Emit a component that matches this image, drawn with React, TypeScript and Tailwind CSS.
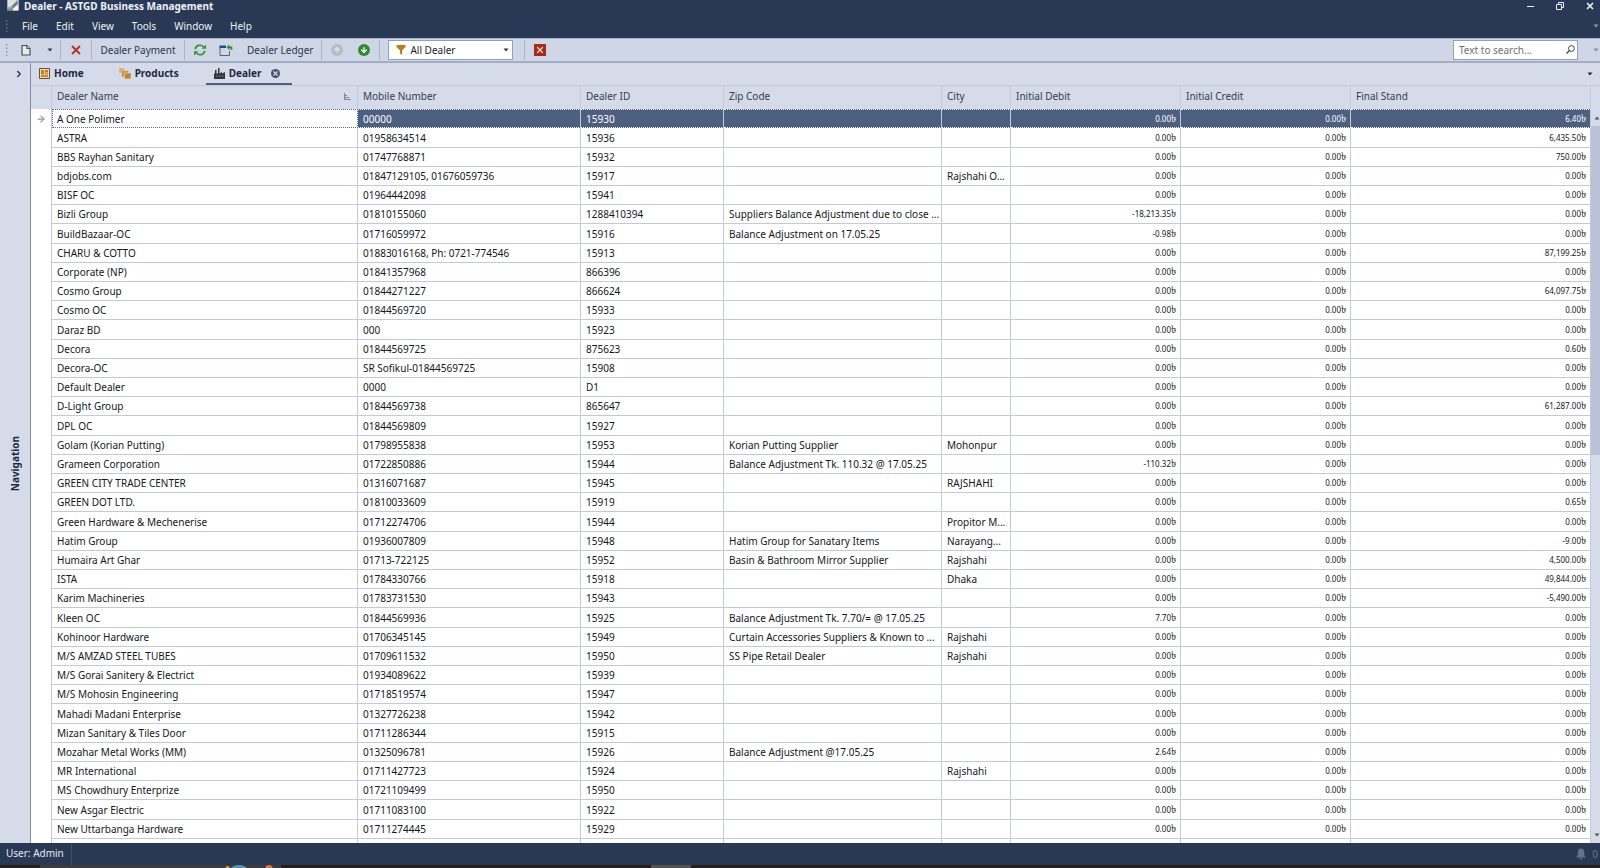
import type { ReactNode } from 'react';
import { ArrowDown, ArrowRight, ArrowUp, ChevronRight, X } from 'lucide-react';
import clsx from 'clsx';

type Dealer = {
  name: string;
  mobile: string;
  id: string;
  zip?: string;
  city?: string;
  debit?: string;
  final?: string;
};

const DEALERS: Dealer[] = [
  { name: 'A One Polimer', mobile: '00000', id: '15930', final: '6.40' },
  { name: 'ASTRA', mobile: '01958634514', id: '15936', final: '6,435.50' },
  { name: 'BBS Rayhan Sanitary', mobile: '01747768871', id: '15932', final: '750.00' },
  { name: 'bdjobs.com', mobile: '01847129105, 01676059736', id: '15917', city: 'Rajshahi O...' },
  { name: 'BISF OC', mobile: '01964442098', id: '15941' },
  {
    name: 'Bizli Group',
    mobile: '01810155060',
    id: '1288410394',
    zip: 'Suppliers Balance Adjustment due to close ...',
    debit: '-18,213.35',
  },
  { name: 'BuildBazaar-OC', mobile: '01716059972', id: '15916', zip: 'Balance Adjustment on 17.05.25', debit: '-0.98' },
  { name: 'CHARU & COTTO', mobile: '01883016168, Ph: 0721-774546', id: '15913', final: '87,199.25' },
  { name: 'Corporate (NP)', mobile: '01841357968', id: '866396' },
  { name: 'Cosmo Group', mobile: '01844271227', id: '866624', final: '64,097.75' },
  { name: 'Cosmo OC', mobile: '01844569720', id: '15933' },
  { name: 'Daraz BD', mobile: '000', id: '15923' },
  { name: 'Decora', mobile: '01844569725', id: '875623', final: '0.60' },
  { name: 'Decora-OC', mobile: 'SR Sofikul-01844569725', id: '15908' },
  { name: 'Default Dealer', mobile: '0000', id: 'D1' },
  { name: 'D-Light Group', mobile: '01844569738', id: '865647', final: '61,287.00' },
  { name: 'DPL OC', mobile: '01844569809', id: '15927' },
  { name: 'Golam (Korian Putting)', mobile: '01798955838', id: '15953', zip: 'Korian Putting Supplier', city: 'Mohonpur' },
  {
    name: 'Grameen Corporation',
    mobile: '01722850886',
    id: '15944',
    zip: 'Balance Adjustment Tk. 110.32 @ 17.05.25',
    debit: '-110.32',
  },
  { name: 'GREEN CITY TRADE CENTER', mobile: '01316071687', id: '15945', city: 'RAJSHAHI' },
  { name: 'GREEN DOT LTD.', mobile: '01810033609', id: '15919', final: '0.65' },
  { name: 'Green Hardware & Mechenerise', mobile: '01712274706', id: '15944', city: 'Propitor M...' },
  {
    name: 'Hatim Group',
    mobile: '01936007809',
    id: '15948',
    zip: 'Hatim Group for Sanatary Items',
    city: 'Narayang...',
    final: '-9.00',
  },
  {
    name: 'Humaira Art Ghar',
    mobile: '01713-722125',
    id: '15952',
    zip: 'Basin & Bathroom Mirror Supplier',
    city: 'Rajshahi',
    final: '4,500.00',
  },
  { name: 'ISTA', mobile: '01784330766', id: '15918', city: 'Dhaka', final: '49,844.00' },
  { name: 'Karim Machineries', mobile: '01783731530', id: '15943', final: '-5,490.00' },
  { name: 'Kleen OC', mobile: '01844569936', id: '15925', zip: 'Balance Adjustment Tk. 7.70/= @ 17.05.25', debit: '7.70' },
  {
    name: 'Kohinoor Hardware',
    mobile: '01706345145',
    id: '15949',
    zip: 'Curtain Accessories Suppliers & Known to ...',
    city: 'Rajshahi',
  },
  { name: 'M/S AMZAD STEEL TUBES', mobile: '01709611532', id: '15950', zip: 'SS Pipe Retail Dealer', city: 'Rajshahi' },
  { name: 'M/S Gorai Sanitery & Electrict', mobile: '01934089622', id: '15939' },
  { name: 'M/S Mohosin Engineering', mobile: '01718519574', id: '15947' },
  { name: 'Mahadi Madani Enterprise', mobile: '01327726238', id: '15942' },
  { name: 'Mizan Sanitary & Tiles Door', mobile: '01711286344', id: '15915' },
  { name: 'Mozahar Metal Works (MM)', mobile: '01325096781', id: '15926', zip: 'Balance Adjustment @17.05.25', debit: '2.64' },
  { name: 'MR International', mobile: '01711427723', id: '15924', city: 'Rajshahi' },
  { name: 'MS Chowdhury Enterprize', mobile: '01721109499', id: '15950' },
  { name: 'New Asgar Electric', mobile: '01711083100', id: '15922' },
  { name: 'New Uttarbanga Hardware', mobile: '01711274445', id: '15929' },
];

const MENU = ['File', 'Edit', 'View', 'Tools', 'Window', 'Help'];
const COLUMNS = ['Dealer Name', 'Mobile Number', 'Dealer ID', 'Zip Code', 'City', 'Initial Debit', 'Initial Credit', 'Final Stand'];

function Caret({ className }: { className?: string }) {
  return (
    <svg viewBox="0 0 6 4" className={clsx('h-1 w-1.5 shrink-0', className)} fill="currentColor" aria-hidden="true">
      <path d="M0.5 0.5h5L3 3.5z" />
    </svg>
  );
}

function Grip({ className }: { className?: string }) {
  return (
    <svg viewBox="0 0 2 12" className={clsx('h-3 w-0.5 shrink-0', className)} fill="currentColor" aria-hidden="true">
      <path d="M0 0h1.5v1.5H0zM0 3.5h1.5V5H0zM0 7h1.5v1.5H0zM0 10.5h1.5V12H0z" />
    </svg>
  );
}

function Separator() {
  return <span className="h-5 w-px shrink-0 bg-[#a9b3c9]" />;
}

function ToolButton({ label, className, children }: { label: string; className: string; children: ReactNode }) {
  return (
    <button type="button" aria-label={label} className={clsx('flex h-5 shrink-0 items-center justify-center', className)}>
      {children}
    </button>
  );
}

function TitleBar() {
  return (
    <header className="bg-[#293955] text-[#eef1f7]">
      <div className="flex h-3 items-center pl-[7px]">
        <svg viewBox="0 0 12 12" className="h-3 w-3 shrink-0" aria-hidden="true">
          <path d="M0 0h12v10.500H0z" fill="#a7acb2" />
          <path d="M1 0h9L5 6 1 7z" fill="#dfe2e5" />
          <path d="M4.500 6.500L10 1.500l1 1.500-5 5z" fill="#6d737c" />
          <path d="M6.500 8.500L11 4.500v6H5z" fill="#f4f5f6" />
          <path d="M0 8.500h6v2H0z" fill="#858b93" />
        </svg>
        <h1 className="ml-[5px] font-bold leading-3">Dealer - ASTGD Business Management</h1>
        <div className="ml-auto flex items-center gap-[18px] pr-1">
          <button type="button" aria-label="Minimize" className="flex h-3 w-3 items-center justify-center">
            <span className="h-px w-[7px] bg-current" />
          </button>
          <button type="button" aria-label="Restore" className="flex h-3 w-3 items-center justify-center">
            <svg viewBox="0 0 8 8" className="h-2 w-2" fill="none" stroke="currentColor">
              <path d="M0.5 2.5h5v5h-5zM2.5 2.5v-2h5v5h-2" />
            </svg>
          </button>
          <button type="button" aria-label="Close" className="flex h-3 w-3 items-center justify-center">
            <X className="h-2.5 w-2.5" strokeWidth={4} />
          </button>
        </div>
      </div>
      <nav className="flex h-[26px] items-center pl-1.5 pt-0.5">
        <Grip className="text-[#5d6c8c]" />
        <div className="ml-3.5 flex gap-[18px]">
          {MENU.map((item) => (
            <button key={item} type="button">
              {item}
            </button>
          ))}
        </div>
        <Caret className="ml-auto mr-px text-[#8e9bb5]" />
      </nav>
    </header>
  );
}

function Toolbar() {
  return (
    <div className="flex h-[25px] items-center border-b-2 border-t border-b-[#a3aec6] border-t-[#aab4ca] bg-[#cfd6e5] pl-1.5 text-[#2b3650]">
      <Grip className="text-[#8f9bb5]" />
      <ToolButton label="New" className="ml-2.5 w-4">
        <svg viewBox="0 0 10 12" className="h-3 w-2.5" fill="#e6e9f0" stroke="#4a4f59" strokeWidth="1.2">
          <path d="M1 1.500h5l3 3v6.500H1z" />
          <path d="M6 1.500v3h3" />
        </svg>
      </ToolButton>
      <ToolButton label="New options" className="ml-2.5 mr-1 w-3">
        <Caret />
      </ToolButton>
      <Separator />
      <ToolButton label="Delete" className="w-[30px]">
        <svg viewBox="0 0 10 10" className="h-2.5 w-2.5" stroke="#b5341f" strokeWidth="1.900">
          <path d="M1 1l8 8M9 1L1 9" />
        </svg>
      </ToolButton>
      <Separator />
      <button type="button" className="w-[92px] text-center">
        Dealer Payment
      </button>
      <Separator />
      <ToolButton label="Refresh" className="w-[30px]">
        <svg viewBox="0 0 12 12" className="h-3 w-3" fill="none" stroke="#35913a" strokeWidth="1.700">
          <path d="M1.200 5.200A4.800 4.800 0 0 1 9.600 3M10.800 6.800A4.800 4.800 0 0 1 2.400 9" />
          <path d="M12 0.500v4.300H7.700zM0 11.500V7.200h4.300z" fill="#35913a" stroke="none" />
        </svg>
      </ToolButton>
      <button type="button" className="flex items-center gap-3.5 pl-1 pr-2">
        <svg viewBox="0 0 14 12" className="h-3 w-3.5" fill="none">
          <path d="M1 3.500v8h9.500V7" stroke="#59606d" />
          <path d="M0.500 1.500h6.500v2.500h-6.500z" fill="#1d4f91" />
          <path d="M7.500 3.300L10.500 0.500v1.900h2.800v3.600h-1.600V4.200h-1.200v1.900z" fill="#2f8c36" />
        </svg>
        Dealer Ledger
      </button>
      <Separator />
      <ToolButton label="Move up" className="w-[30px]">
        <span className="flex h-3 w-3 items-center justify-center rounded-full bg-[#b9bcc3] text-[#dfe2e9]">
          <ArrowUp className="h-2 w-2" strokeWidth={4} />
        </span>
      </ToolButton>
      <ToolButton label="Move down" className="mr-[3px] w-6">
        <span className="flex h-3 w-3 items-center justify-center rounded-full bg-[#2f8a35] text-white">
          <ArrowDown className="h-2 w-2" strokeWidth={4} />
        </span>
      </ToolButton>
      <Separator />
      <div className="relative mx-2 w-[125px] shrink-0">
        <select
          aria-label="Dealer filter"
          defaultValue="All Dealer"
          className="block h-5 w-full appearance-none border border-[#93a0bb] bg-white pl-[21px] text-[#1b2233]"
        >
          <option>All Dealer</option>
        </select>
        <svg viewBox="0 0 10 10" className="pointer-events-none absolute left-2 top-[5px] h-2.5 w-2.5" fill="#c07a1c" aria-hidden="true">
          <path d="M0.500 0h9v2L6 5.500V10L4 8.500v-3L0.500 2z" />
        </svg>
        <Caret className="pointer-events-none absolute right-1 top-2" />
      </div>
      <div className="w-[3px]" />
      <Separator />
      <ToolButton label="Close filter" className="ml-[9px] w-3">
        <span className="flex h-3 w-3 items-center justify-center bg-[#a72b18] text-[#f3d9d4]">
          <X className="h-2.5 w-2.5" strokeWidth={3} />
        </span>
      </ToolButton>
      <div className="relative ml-auto w-[125px] shrink-0">
        <input
          type="text"
          aria-label="Search"
          placeholder="Text to search..."
          className="block h-5 w-full border border-[#93a0bb] bg-white pl-[5px] placeholder:text-[#6b6f78]"
        />
        <svg viewBox="0 0 9 9" className="pointer-events-none absolute right-[3px] top-[5px] h-[9px] w-[9px]" fill="none" stroke="#3a3f4a" aria-hidden="true">
          <circle cx="5.500" cy="3.500" r="2.900" />
          <path d="M3.500 5.500L0.500 8.500" strokeWidth="1.300" />
        </svg>
      </div>
      <Caret className="ml-[15px] mr-px text-[#8490aa]" />
    </div>
  );
}

function Tab({ icon, label, active }: { icon: ReactNode; label: string; active?: boolean }) {
  return (
    <div className={clsx('flex h-[22px] items-center border-b-2 pl-2', active ? 'border-[#4d6082] pr-3' : 'border-transparent pr-2')}>
      <button type="button" role="tab" aria-selected={Boolean(active)} className="flex items-center gap-1 font-bold">
        {icon}
        {label}
      </button>
      <span className="ml-2.5 flex h-[9px] w-[9px]">
        {active && (
          <button type="button" aria-label={`Close ${label}`} className="flex h-[9px] w-[9px] items-center justify-center rounded-full bg-[#47536b] text-[#d6dbe9]">
            <X className="h-[7px] w-[7px]" strokeWidth={4} />
          </button>
        )}
      </span>
    </div>
  );
}

function TabStrip() {
  return (
    <div className="flex h-[22px] items-center bg-[#d6dbe9] text-[#1d2942]" role="tablist">
      <Tab
        label="Home"
        icon={
          <svg viewBox="0 0 11 11" className="h-[11px] w-[11px]">
            <path d="M0.500 0.500h10v10h-10z" fill="#e9dcc8" stroke="#5c5346" />
            <path d="M2 2h3.200v4.500H2zM6 2h3v2.500H6zM6 5.200h3v1.300H6zM2 7.300h7V9H2z" fill="#c97f16" />
          </svg>
        }
      />
      <Tab
        label="Products"
        icon={
          <svg viewBox="0 0 12 11" className="h-[11px] w-3" stroke="#d6dbe9" strokeWidth="0.600">
            <path d="M0 0h5.500v5H0z" fill="#d9a866" />
            <path d="M2.500 2.500h7V9h-7z" fill="#d09344" />
            <path d="M5.500 5H12v6H5.500z" fill="#c8842c" />
          </svg>
        }
      />
      <Tab
        active
        label="Dealer"
        icon={
          <svg viewBox="0 0 11 11" className="h-[11px] w-[11px]">
            <path d="M0 11V5.500h1V2h1.500v3.500H4V0h1.500v5.500L8 4v1.500L11 4v7z" fill="#33363d" />
            <path d="M2 7.500h1.200v1H2zM5 7.500h1.200v1H5zM8 7.500h1.200v1H8z" fill="#9aa0ac" />
          </svg>
        }
      />
      <button type="button" aria-label="Tab list" className="ml-auto mr-[7px]">
        <Caret />
      </button>
    </div>
  );
}

function SideNav() {
  return (
    <aside className="flex w-[31px] shrink-0 flex-col border-r border-[#7f8cab] bg-[#d6dbe9] text-[#1d2942]">
      <button type="button" aria-label="Expand navigation" className="flex h-[21px] items-center justify-end pr-1.5">
        <ChevronRight className="h-2.5 w-2.5" strokeWidth={3} />
      </button>
      <button type="button" className="flex flex-1 items-center justify-center">
        <span className="rotate-180 font-bold [writing-mode:vertical-rl]">Navigation</span>
      </button>
    </aside>
  );
}

function Amount({ value = '0.00', selected }: { value?: string; selected?: boolean }) {
  return (
    <td
      className={clsx(
        'overflow-hidden whitespace-nowrap border-b border-r border-[#c3c9da] pr-1 text-right text-[8px]',
        selected && 'border-t border-t-white border-b-white bg-[#4d6082] text-white [border-bottom-style:dotted] [border-top-style:dotted]',
      )}
    >
      {value}
      <span className="text-[11px] leading-3">৳</span>
    </td>
  );
}

function TextCell({ value, selected }: { value?: string; selected?: boolean }) {
  return (
    <td
      className={clsx(
        'overflow-hidden whitespace-nowrap border-b border-r border-[#c3c9da] pl-[5px]',
        selected && 'border-t border-t-white border-b-white bg-[#4d6082] text-white [border-bottom-style:dotted] [border-top-style:dotted]',
      )}
    >
      {value}
    </td>
  );
}

function DealerTable() {
  return (
    <table className="w-full table-fixed border-separate border-spacing-0 leading-4 text-[#14161c]">
      <colgroup>
        <col className="w-[21px]" />
        <col className="w-[306px]" />
        <col className="w-[223px]" />
        <col className="w-[143px]" />
        <col className="w-[218px]" />
        <col className="w-[69px]" />
        <col className="w-[170px]" />
        <col className="w-[170px]" />
        <col />
      </colgroup>
      <thead>
        <tr className="h-6 bg-[#d6dbe9] text-left text-[#333c52]">
          <th className="border-r border-t border-[#c3c9da]" />
          {COLUMNS.map((column, i) => (
            <th key={column} scope="col" className="border-r border-t border-[#c3c9da] pb-[3px] pl-[5px] font-normal">
              <span className="flex items-center justify-between pr-1.5">
                {column}
                {i === 0 && (
                  <svg viewBox="0 0 7 7" className="h-[7px] w-[7px]" stroke="#7b849a" aria-hidden="true">
                    <path d="M0.500 0v7M0 6.500h7M1 4.500h4M1 2.500h2" />
                  </svg>
                )}
              </span>
            </th>
          ))}
        </tr>
      </thead>
      <tbody>
        {DEALERS.map((dealer, i) => {
          const selected = i === 0;
          return (
            <tr key={dealer.name} className="h-[19px] nth-[5n+2]:h-5" aria-selected={selected}>
              <td className="border-r border-[#c3c9da]">
                {selected && <ArrowRight className="mx-auto h-2.5 w-2.5 text-[#8f9ab3]" strokeWidth={3} />}
              </td>
              <th
                scope="row"
                className={clsx(
                  'overflow-hidden whitespace-nowrap text-left font-normal',
                  selected ? 'border border-dotted border-[#5a6a8a] pl-1' : 'border-b border-r border-[#c3c9da] pl-[5px]',
                )}
              >
                {dealer.name}
              </th>
              <TextCell value={dealer.mobile} selected={selected} />
              <TextCell value={dealer.id} selected={selected} />
              <TextCell value={dealer.zip} selected={selected} />
              <TextCell value={dealer.city} selected={selected} />
              <Amount value={dealer.debit} selected={selected} />
              <Amount selected={selected} />
              <Amount value={dealer.final} selected={selected} />
            </tr>
          );
        })}
        <tr className="h-5">
          <td className="border-r border-[#c3c9da]" />
          {COLUMNS.map((column) => (
            <td key={column} className="border-r border-[#c3c9da]" />
          ))}
        </tr>
      </tbody>
    </table>
  );
}

function ScrollRail() {
  return (
    <div className="flex w-[9px] shrink-0 flex-col border-t border-[#c3c9da] bg-[#d6dbe9] text-[#4b5468]">
      <div className="h-6" />
      <button type="button" aria-label="Scroll up" className="flex h-4 items-center justify-end">
        <Caret className="rotate-180" />
      </button>
      <div className="flex-1">
        <div className="h-[47%] bg-[#bac2d8]" />
      </div>
      <button type="button" aria-label="Scroll down" className="flex h-4 items-center justify-end">
        <Caret />
      </button>
    </div>
  );
}

function StatusBar() {
  return (
    <footer className="flex h-[22px] shrink-0 items-center bg-[#293955] text-[#e4e8f0]">
      <span className="flex h-full items-center border-r border-[#3f4e6b] pb-0.5 pl-1.5 pr-[7px]">User: Admin</span>
      <span className="ml-auto flex items-center gap-1.5 pr-0.5 text-[#66728a]">
        <svg viewBox="0 0 10 12" className="h-3 w-2.5" fill="currentColor" aria-hidden="true">
          <path d="M5 0.500c2.500 0 3.200 2 3.200 4.200 0 2.500 0.500 3.600 1.800 4.800H0c1.300-1.200 1.800-2.300 1.800-4.800C1.800 2.500 2.500 0.500 5 0.500zM3.800 10h2.400c0 2-2.400 2-2.400 0z" />
        </svg>
        0
      </span>
    </footer>
  );
}

function Taskbar() {
  return (
    <div className="flex h-[3px] shrink-0 overflow-hidden bg-[#262019]">
      <div className="ml-10 flex w-[241px] items-start bg-[#3c3c3d] pl-[185px]">
        <svg viewBox="0 0 50 3" className="h-[3px] w-[50px]" aria-hidden="true">
          <circle cx="2.500" cy="3" r="2" fill="#d8a440" />
          <ellipse cx="14" cy="4" rx="8" ry="4" fill="#5b93ad" />
          <circle cx="44" cy="3.500" r="3.500" fill="#e0773a" />
        </svg>
      </div>
      <div className="ml-[370px] w-10 bg-[#55534f]" />
    </div>
  );
}

export default function App() {
  return (
    <div className="flex h-screen flex-col overflow-hidden bg-white font-['Noto_Sans','Open_Sans',sans-serif] text-[10px]">
      <TitleBar />
      <Toolbar />
      <div className="flex min-h-0 flex-1">
        <SideNav />
        <main className="flex min-w-0 flex-1 flex-col">
          <TabStrip />
          <div className="flex min-h-0 flex-1">
            <div className="min-w-0 flex-1 overflow-hidden">
              <DealerTable />
            </div>
            <ScrollRail />
          </div>
        </main>
      </div>
      <StatusBar />
      <Taskbar />
    </div>
  );
}
